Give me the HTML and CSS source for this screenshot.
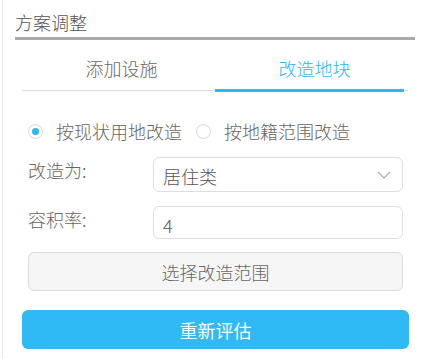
FILE: index.html
```html
<!DOCTYPE html>
<html lang="zh">
<head>
    <meta charset="UTF-8">
    <title>方案调整</title>
    <link rel="stylesheet" href="styles.css">
</head>
<body>
<div class="panel">
    <!-- Заголовок -->
    <div class="panel-title">方案调整</div>

    <!-- Вкладки -->
    <div class="tabs">
        <div class="tab">添加设施</div>
        <div class="tab tab-active">改造地块</div>
    </div>

    <div class="form-body">
        <div class="radio-row">
            <label class="radio radio-checked"><span class="radio-dot"></span>按现状用地改造</label>
            <label class="radio"><span class="radio-dot"></span>按地籍范围改造</label>
        </div>

        <div class="form-row">
            <div class="form-label">改造为:</div>
            <div class="select">
                <span>居住类</span>
                <svg class="select-arrow" width="14" height="8" viewBox="0 0 14 8">
                    <path d="M1 1 L7 7 L13 1" fill="none" stroke="#aaa" stroke-width="1.2"/>
                </svg>
            </div>
        </div>

        <div class="form-row">
            <div class="form-label">容积率:</div>
            <div class="input">4</div>
        </div>

        <button class="range-button">选择改造范围</button>
    </div>

    <button class="eval-button">重新评估</button>
</div>
</body>
</html>
```

FILE: styles.css
```css
* {
    margin: 0;
    padding: 0;
    box-sizing: border-box;
}

body {
    font-family: "Noto Sans CJK SC", "Noto Sans", sans-serif;
    font-size: 18px;
    font-weight: 300;
    color: #666;
    background-color: #fff;
    width: 423px;
    height: 359px;
    overflow: hidden;
}

.panel {
    margin-left: 2px;
    height: 359px;
    border-left: 1px solid #e6e6e6;
}

.panel-title {
    margin: 0 8px 0 12px;
    padding: 10px 0 3px 0;
    line-height: 24px;
    color: #555;
    border-bottom: 3px solid #aaa;
}

/* Вкладки */
.tabs {
    display: flex;
    margin: 0 15px 0 19px;
    border-bottom: 1px solid #dcdcdc;
}

.tab {
    flex: 1;
    position: relative;
    padding: 7px 0 0 6px;
    height: 50px;
    line-height: 43px;
    text-align: center;
    color: #666;
}

.tab-active {
    color: #2db7f5;
}

.tab-active::after {
    content: "";
    position: absolute;
    left: 0;
    right: 4px;
    bottom: -2px;
    height: 3px;
    background-color: #2db7f5;
}

.form-body {
    padding: 0 20px 0 25px;
}

.radio-row {
    display: flex;
    gap: 14px;
    margin-top: 28px;
    line-height: 24px;
}

.radio {
    display: flex;
    align-items: center;
    gap: 13px;
    color: #666;
}

.radio-dot {
    width: 15px;
    height: 15px;
    border: 1px solid #d4d6da;
    border-radius: 50%;
    display: flex;
    align-items: center;
    justify-content: center;
}

.radio-checked .radio-dot::after {
    content: "";
    width: 7px;
    height: 7px;
    border-radius: 50%;
    background-color: #2db7f5;
}

.form-row {
    display: flex;
    margin-top: 14px;
}

.form-label {
    width: 125px;
    line-height: 26px;
}

.select, .input {
    flex: 1;
    display: flex;
    align-items: center;
    padding: 0 9px;
    border: 1px solid #dcdee2;
    border-radius: 6px;
    color: #555;
}

.select {
    height: 35px;
    justify-content: space-between;
    padding-top: 2px;
}

.select-arrow {
    margin-right: 2px;
    margin-top: -2px;
}

.input {
    height: 33px;
    padding-top: 4px;
}

.range-button {
    display: block;
    width: 100%;
    height: 39px;
    margin-top: 13px;
    font-family: inherit;
    font-size: 18px;
    font-weight: 300;
    color: #666;
    background-color: #f6f6f6;
    border: 1px solid #dcdcdc;
    border-radius: 6px;
}

.eval-button {
    display: block;
    width: 387px;
    height: 39px;
    margin: 19px 0 0 19px;
    font-family: inherit;
    font-size: 18px;
    font-weight: 400;
    color: #fff;
    background-color: #2fb9f5;
    border: none;
    border-radius: 6px;
}
```
